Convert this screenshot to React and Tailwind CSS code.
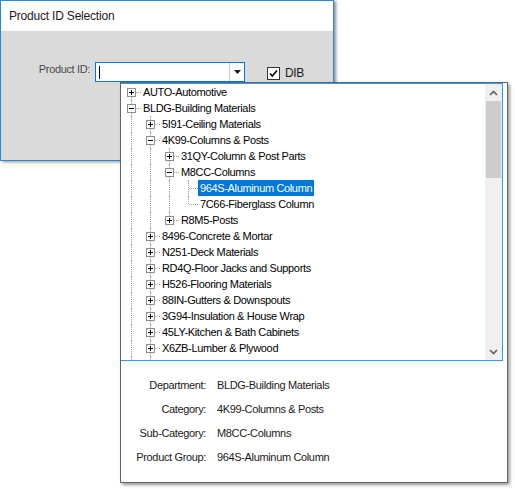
import React from 'react'

const font = { fontFamily: '"Liberation Sans", Arial, sans-serif' }

// tree rows as seen in the scrolled list
const rows = [
  { text: 'AUTO-Automotive', lvl: 0, box: '+', anc: [], own: 'down' },
  { text: 'BLDG-Building Materials', lvl: 0, box: '-', anc: [], own: 'full' },
  { text: '5I91-Ceiling Materials', lvl: 1, box: '+', anc: [0], own: 'full' },
  { text: '4K99-Columns & Posts', lvl: 1, box: '-', anc: [0], own: 'full' },
  { text: '31QY-Column & Post Parts', lvl: 2, box: '+', anc: [0, 1], own: 'full' },
  { text: 'M8CC-Columns', lvl: 2, box: '-', anc: [0, 1], own: 'full' },
  { text: '964S-Aluminum Column', lvl: 3, box: null, anc: [0, 1, 2], own: 'full', selected: true },
  { text: '7C66-Fiberglass Column', lvl: 3, box: null, anc: [0, 1, 2], own: 'up' },
  { text: 'R8M5-Posts', lvl: 2, box: '+', anc: [0, 1], own: 'up' },
  { text: '8496-Concrete & Mortar', lvl: 1, box: '+', anc: [0], own: 'full' },
  { text: 'N251-Deck Materials', lvl: 1, box: '+', anc: [0], own: 'full' },
  { text: 'RD4Q-Floor Jacks and Supports', lvl: 1, box: '+', anc: [0], own: 'full' },
  { text: 'H526-Flooring Materials', lvl: 1, box: '+', anc: [0], own: 'full' },
  { text: '88IN-Gutters & Downspouts', lvl: 1, box: '+', anc: [0], own: 'full' },
  { text: '3G94-Insulation & House Wrap', lvl: 1, box: '+', anc: [0], own: 'full' },
  { text: '45LY-Kitchen & Bath Cabinets', lvl: 1, box: '+', anc: [0], own: 'full' },
  { text: 'X6ZB-Lumber & Plywood', lvl: 1, box: '+', anc: [0], own: 'full' },
  { text: '9SHA-Moldings & Millwork', lvl: 1, box: '+', anc: [0], own: 'full' },
]

const details = [
  ['Department:', 'BLDG-Building Materials'],
  ['Category:', '4K99-Columns & Posts'],
  ['Sub-Category:', 'M8CC-Columns'],
  ['Product Group:', '964S-Aluminum Column'],
]

const ExpandBox = ({ plus }) => (
  <svg width="9" height="9" viewBox="0 0 9 9" className="absolute left-[5px] top-[4px]">
    <rect x="0.5" y="0.5" width="8" height="8" fill="#fff" stroke="#8f8f8f" />
    <path d="M2 4.5h5" stroke="#000" />
    {plus && <path d="M4.5 2v5" stroke="#000" />}
  </svg>
)

const TreeRow = ({ row }) => {
  const vline = {
    full: 'top-0 h-4',
    up: 'top-0 h-2',
    down: 'top-2 h-2',
  }[row.own]

  return (
    <div className="flex h-4 items-center">
      {Array.from({ length: row.lvl }).map((_, i) => (
        <div key={i} className="relative h-4 w-[19px] shrink-0">
          {row.anc.includes(i) && (
            <div className="absolute left-[9px] top-0 h-4 border-l border-dotted border-[#a0a0a0]" />
          )}
        </div>
      ))}
      <div className="relative h-4 w-[19px] shrink-0">
        <div className={`absolute left-[9px] border-l border-dotted border-[#a0a0a0] ${vline}`} />
        <div className="absolute left-[10px] top-[8px] w-[9px] border-t border-dotted border-[#a0a0a0]" />
        {row.box && <ExpandBox plus={row.box === '+'} />}
      </div>
      <span
        className={`whitespace-nowrap px-[2px] leading-4 ${
          row.selected ? 'bg-[#0078d7] text-white' : 'text-black'
        }`}
      >
        {row.text}
      </span>
    </div>
  )
}

const Scrollbar = () => (
  <div className="flex w-[17px] shrink-0 flex-col bg-[#f0f0f0]">
    <div className="flex h-[17px] items-center justify-center">
      <svg width="9" height="6" viewBox="0 0 9 6">
        <path d="M1 5l3.5-3.5L8 5" fill="none" stroke="#606060" strokeWidth="1.6" />
      </svg>
    </div>
    <div className="mx-px h-[77px] bg-[#cdcdcd]" />
    <div className="flex-1" />
    <div className="flex h-[17px] items-center justify-center">
      <svg width="9" height="6" viewBox="0 0 9 6">
        <path d="M1 1l3.5 3.5L8 1" fill="none" stroke="#606060" strokeWidth="1.6" />
      </svg>
    </div>
  </div>
)

export default function App() {
  return (
    <div className="relative h-[489px] w-[515px] overflow-hidden bg-white text-[11px] tracking-[-0.35px]" style={font}>
      {/* background window */}
      <div className="flex h-[161px] w-[334px] flex-col border border-[#2a88d6] shadow-[2px_1px_3px_rgba(0,0,0,0.45)]">
        <div className="flex h-[30px] items-center bg-white pl-[8px] text-[12px] tracking-[-0.2px] text-[#1a1a1a]">
          Product ID Selection
        </div>
        <div className="flex flex-1 items-start bg-[#dadada] pt-[31px]">
          <div className="w-[89px] text-right leading-[14px] text-[#4a4a4a]">Product ID:</div>
          <div className="ml-[5px] flex h-[20px] w-[150px] items-stretch border border-[#0078d7] bg-white">
            <div className="flex flex-1 items-center pl-[3px]">
              <div className="h-[13px] w-px bg-black" />
            </div>
            <div className="flex w-[15px] items-center justify-center border-l border-[#c8c8c8]">
              <svg width="7" height="4" viewBox="0 0 7 4">
                <path d="M0 0h7L3.5 4z" fill="#1a1a1a" />
              </svg>
            </div>
          </div>
          <div className="ml-[22px] mt-[5px] flex h-[13px] w-[13px] items-center justify-center border border-[#333] bg-white">
            <svg width="9" height="9" viewBox="0 0 9 9">
              <path d="M1 4.5l2.3 2.5L8 1.5" fill="none" stroke="#000" strokeWidth="1.6" />
            </svg>
          </div>
          <div className="ml-[5px] mt-[4px] text-[12px] leading-[14px] text-[#1a1a1a]">DIB</div>
        </div>
      </div>

      {/* dropdown popup lying over the window */}
      <div className="absolute left-[120px] top-[82px] flex h-[401px] w-[388px] flex-col border border-[#646464] bg-white shadow-[2px_2px_3px_rgba(0,0,0,0.4)]">
        <div className="mr-[4px] flex h-[278px] border-y border-r border-[#3399ff]">
          <div className="flex-1 overflow-hidden pl-px">
            {rows.map((row) => (
              <TreeRow key={row.text} row={row} />
            ))}
          </div>
          <Scrollbar />
        </div>
        <div className="grid grid-cols-[85px_1fr] gap-x-[11px] pt-[12px] text-[#1a1a1a]">
          {details.map(([label, value]) => (
            <React.Fragment key={label}>
              <div className="h-6 text-right leading-6">{label}</div>
              <div className="h-6 leading-6">{value}</div>
            </React.Fragment>
          ))}
        </div>
      </div>
    </div>
  )
}
